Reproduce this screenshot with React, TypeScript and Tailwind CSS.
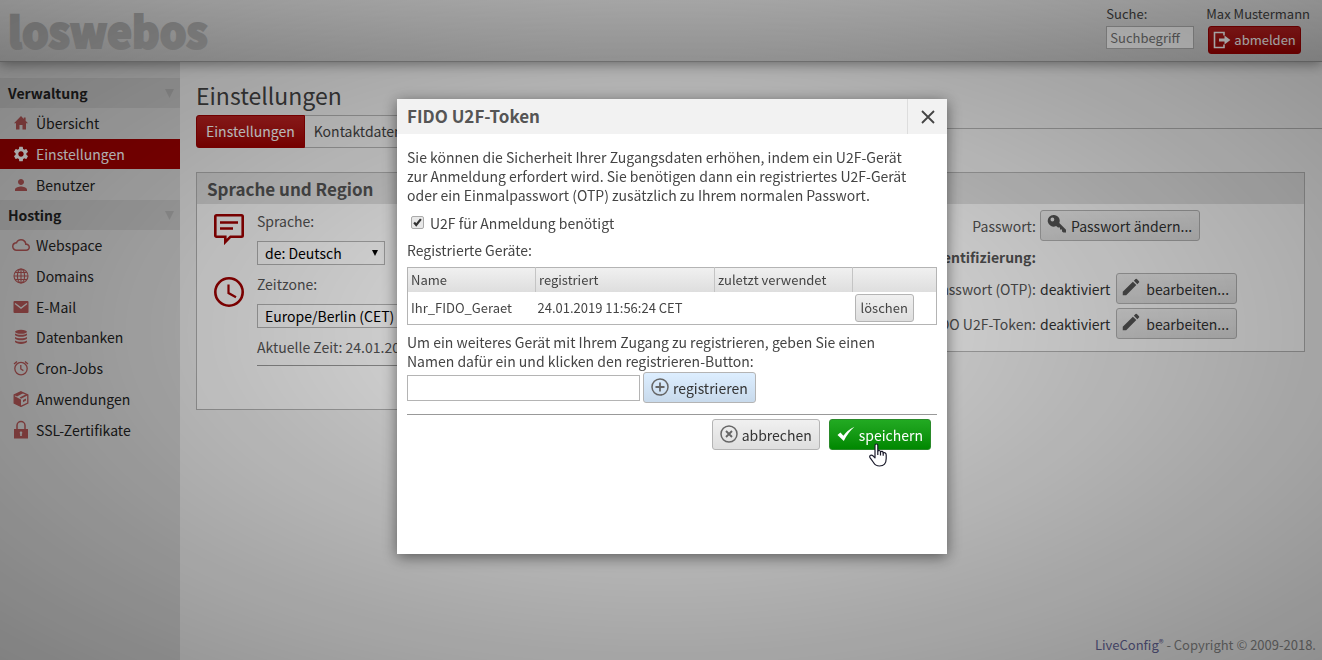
import React, {useState} from 'react';
import {MdCloudQueue, MdEdit, MdPerson, MdSettings} from 'react-icons/md';

const HomeIcon = () => (
    <svg viewBox="0 0 16 16" className="w-4 h-4" fill="currentColor">
        <path d="M8 1 L1 8.3 H3 V14.5 H6.5 V10 H9.5 V14.5 H13 V8.3 H15 L12.6 5.8 V2.5 H10.8 V4 Z"/>
    </svg>
)

const GlobeIcon = () => (
    <svg viewBox="0 0 16 16" className="w-4 h-4" fill="none" stroke="currentColor" strokeWidth="1.1">
        <circle cx="8" cy="8" r="7"/>
        <ellipse cx="8" cy="8" rx="3.6" ry="7"/>
        <path d="M8 1 V15 M1 8 H15 M2.2 4.5 H13.8 M2.2 11.5 H13.8"/>
    </svg>
)

const MailIcon = () => (
    <svg viewBox="0 0 16 16" className="w-4 h-4">
        <rect x="0.5" y="2" width="15" height="12" rx="1" fill="currentColor"/>
        <path d="M2 4.5 L8 9 L14 4.5" fill="none" stroke="#d7d7d7" strokeWidth="1.4"/>
    </svg>
)

const DatabaseIcon = () => (
    <svg viewBox="0 0 16 16" className="w-4 h-4" fill="currentColor">
        <ellipse cx="8" cy="2.8" rx="6" ry="2"/>
        <path d="M2 4.4 C4 6.2 12 6.2 14 4.4 V6 C13 8.4 3 8.4 2 6 Z"/>
        <path d="M2 8 C4 9.8 12 9.8 14 8 V9.4 C13 11.8 3 11.8 2 9.4 Z"/>
        <path d="M2 11.4 C4 13.2 12 13.2 14 11.4 V12.8 C13 15.6 3 15.6 2 12.8 Z"/>
    </svg>
)

const AlarmIcon = () => (
    <svg viewBox="0 0 16 16" className="w-4 h-4" fill="none" stroke="currentColor" strokeWidth="1.3">
        <circle cx="8" cy="8.6" r="6.2"/>
        <path d="M7.8 5 V9 L10.4 10.6 M1 4 L4 1.4 M15 4 L12 1.4"/>
    </svg>
)

const BoxIcon = () => (
    <svg viewBox="0 0 16 16" className="w-4 h-4">
        <path d="M8 0.8 L14.8 4 V12 L8 15.4 L1.2 12 V4 Z" fill="none" stroke="currentColor" strokeWidth="1.3"/>
        <path d="M1.2 5 L8 8.4 V15.4 L1.2 12 Z M1.2 4 L8 0.8 L10.6 2 L4 5.4 Z M6.6 6.6 L13 3.2 L14.8 4.2 L8 7.8 Z M10 9 L13 7.4 V9.6 L10 11.2 Z"
              fill="currentColor"/>
    </svg>
)

const LockIcon = () => (
    <svg viewBox="0 0 16 20" className="w-4 h-5">
        <path d="M4 9 V5.5 a4 4 0 0 1 8 0 V9" fill="none" stroke="currentColor" strokeWidth="1.5"/>
        <rect x="1" y="9" width="14" height="9.5" fill="currentColor"/>
        <path d="M8 11.6 V16 M6.8 12.8 H9.2" stroke="#d7d7d7" strokeWidth="1.6"/>
    </svg>
)

const CommentIcon = () => (
    <svg viewBox="0 0 32 32" className="w-8 h-8" fill="none" stroke="#a00000" strokeWidth="2.6">
        <path d="M3.5 2.3 H28.5 Q29.7 2.3 29.7 3.5 V22.5 Q29.7 23.7 28.5 23.7 H17.5 L12.3 29 V23.7 H3.5 Q2.3 23.7 2.3 22.5 V3.5 Q2.3 2.3 3.5 2.3 Z"/>
        <path d="M7 9.5 H25 M7 15.5 H20"/>
    </svg>
)

const ClockIcon = () => (
    <svg viewBox="0 0 32 32" className="w-8 h-8" fill="none" stroke="#a00000" strokeWidth="2.6">
        <circle cx="16" cy="16" r="13.7"/>
        <path d="M15.5 8.5 V17 L23 21.2" strokeWidth="2.2"/>
    </svg>
)

const KeyIcon = () => (
    <svg viewBox="0 0 20 20" className="w-5 h-5 -ml-px mb-[3px]" fill="#555555">
        <path fillRule="evenodd"
              d="M6.8 1 a5.8 5.8 0 1 0 2.3 11 L11 13.4 H13 V15.4 H15 V17.4 L16.4 18.6 H19 V15.8 L12.3 9 A5.8 5.8 0 0 0 6.8 1 Z M5.4 3.6 a1.9 1.9 0 1 1 0 3.8 a1.9 1.9 0 0 1 0 -3.8 Z"/>
    </svg>
)

const LogoutIcon = () => (
    <svg viewBox="0 0 18 18" className="w-[18px] h-[18px]">
        <path d="M11 4.5 V1.5 H1.5 V16.5 H11 V13.5" fill="none" stroke="#fff" strokeWidth="1.6"/>
        <path d="M6 7.4 H11.5 V4.4 L17.4 9 L11.5 13.6 V10.6 H6 Z" fill="#fff"/>
    </svg>
)

const PlusIcon = () => (
    <svg viewBox="0 0 18 18" className="w-[18px] h-[18px] mb-[2px]" fill="none" stroke="#666" strokeWidth="1.5">
        <circle cx="9" cy="9" r="8"/>
        <path d="M9 4.5 V13.5 M4.5 9 H13.5" strokeWidth="1.8"/>
    </svg>
)

const CancelIcon = () => (
    <svg viewBox="0 0 18 18" className="w-[18px] h-[18px] mb-[2px]" fill="none" stroke="#666" strokeWidth="1.5">
        <circle cx="9" cy="9" r="8"/>
        <path d="M6 6 L12 12 M12 6 L6 12" strokeWidth="1.9"/>
    </svg>
)

const CheckIcon = () => (
    <svg viewBox="0 0 18 18" className="w-[18px] h-[18px] mb-[2px]" fill="#fff">
        <path d="M0.5 10 L3.4 7.6 L6.4 10.8 Q10.5 5 17.5 1.8 Q11 7.5 6.8 16 Z"/>
    </svg>
)

const verwaltung = [
    {label: 'Übersicht', icon: <HomeIcon/>},
    {label: 'Einstellungen', icon: <MdSettings size={18}/>, active: true},
    {label: 'Benutzer', icon: <MdPerson size={18}/>},
]

const hosting = [
    {label: 'Webspace', icon: <MdCloudQueue size={18}/>},
    {label: 'Domains', icon: <GlobeIcon/>},
    {label: 'E-Mail', icon: <MailIcon/>},
    {label: 'Datenbanken', icon: <DatabaseIcon/>},
    {label: 'Cron-Jobs', icon: <AlarmIcon/>},
    {label: 'Anwendungen', icon: <BoxIcon/>},
    {label: 'SSL-Zertifikate', icon: <LockIcon/>},
]

const MenuTitle = ({title}: { title: string }) => (
    <h2 className="flex items-center justify-between h-[30px] pl-2 pr-[5px] bg-[#c8c8c8] font-bold text-[#222]">
        {title}
        <svg viewBox="0 0 10 10" className="w-[10px] h-[10px]">
            <path d="M0 1 H9 L4.5 10 Z" fill="#b4b4b4"/>
        </svg>
    </h2>
)

const MenuList = ({items}: { items: any[] }) => (
    <>
        {items.map((item) => (
            <li key={item.label}>
                <a href="#"
                   className={item.active
                       ? 'flex items-center h-full gap-[6px] pl-3 text-white bg-[#a00000]'
                       : 'flex items-center h-full gap-[6px] pl-3 text-[#222]'}>
                    <span className={item.active ? 'flex justify-center w-[18px] text-white' : 'flex justify-center w-[18px] text-[#b05555]'}>
                        {item.icon}
                    </span>
                    {item.label}
                </a>
            </li>
        ))}
    </>
)

const button = 'relative inline-flex items-center gap-1 h-[31px] px-[7px] border rounded-[3px] bg-linear-to-b'
const greyButton = button + ' border-[#b4b4b4] from-[#f0f0f0] to-[#dedede] text-[#333]'

const Select = ({id, value, className}: { id: string, value: string, className: string }) => (
    <div className={'relative ' + className}>
        <select id={id} className="block w-full h-6 pl-[7px] border border-[#b4b4b4] bg-white text-black appearance-none">
            <option>{value}</option>
        </select>
        <svg viewBox="0 0 6 6" className="absolute right-[7px] top-[9px] w-[6px] h-[6px] pointer-events-none">
            <path d="M0 0 H6 L3 6 Z"/>
        </svg>
    </div>
)

const Header = () => (
    <header className="relative flex justify-between h-[62px] pl-2 pr-3 border-b border-[#999] bg-linear-to-b from-[#f0f0f0] to-[#c8c8c8] shadow-[0_2px_12px_rgba(0,0,0,0.4)]">
        <div className="text-[42px] leading-[60px] font-black text-[#b4b4b4] [-webkit-text-stroke:2px_#b4b4b4]">loswebos</div>
        <div className="flex gap-3 pt-[5px] text-[13px] leading-[18px] text-[#444]">
            <div>
                <label htmlFor="search" className="block mb-[3px]">Suche:</label>
                <input id="search" type="text" placeholder="Suchbegriff"
                       className="block w-[88px] h-[23px] px-[3px] border border-[#b4b4b4] bg-white placeholder:text-[#777]"/>
            </div>
            <div>
                <div className="mb-[3px]">Max Mustermann</div>
                <button type="button"
                        className="flex items-center gap-[3px] h-[28px] ml-[2px] px-1 border border-[#a00000] rounded-[3px] bg-linear-to-b from-[#bb2222] to-[#a00000] text-white">
                    <LogoutIcon/>abmelden
                </button>
            </div>
        </div>
    </header>
)

const Settings = () => (
    <main className="flex-1 pt-[15px] text-[#555]">
        <h1 className="pb-[2px] pl-4 text-[23px] leading-[36px] text-[#444]">Einstellungen</h1>
        <div className="flex items-start pl-4">
            <nav className="flex h-[33px] leading-[31px] border border-[#b4b4b4] rounded-[3px]">
                <a href="#"
                   className="-m-px px-[9px] border border-[#a00000] rounded-l-[3px] bg-linear-to-b from-[#bb2222] to-[#a00000] text-white">Einstellungen</a>
                <a href="#" className="px-[10px] text-[#444]">Kontaktdaten</a>
            </nav>
            <div className="flex-1 mt-[13px] border-t border-[#b4b4b4]"/>
        </div>

        <div className="grid items-start grid-cols-2 gap-4 pt-6 pl-4 pr-[17px]">
            <section className="pb-[43px] border border-[#b4b4b4] bg-[#fcfcfc]">
                <h2 className="h-[31px] pl-[10px] text-[17px] leading-[31px] font-bold bg-[#e0e0e0]">Sprache und Region</h2>
                <div className="grid grid-cols-[32px_1fr] gap-x-[12px] px-4 pt-[7px]">
                    <div className="pt-[2px]"><CommentIcon/></div>
                    <div>
                        <label htmlFor="language" className="block leading-[20px]">Sprache:</label>
                        <Select id="language" value="de: Deutsch" className="w-[128px] mt-[10px]"/>
                    </div>
                    <div className="pt-[11px]"><ClockIcon/></div>
                    <div className="pt-[9px]">
                        <label htmlFor="timezone" className="block leading-[20px]">Zeitzone:</label>
                        <Select id="timezone" value="Europe/Berlin (CET)" className="w-[200px] mt-[10px]"/>
                        <p className="pt-2 pb-[7px] leading-[22px] border-b border-[#999]">Aktuelle Zeit: 24.01.2019</p>
                    </div>
                </div>
            </section>

            <section className="border border-[#b4b4b4] bg-[#fcfcfc]">
                <h2 className="h-[31px] pl-[10px] text-[17px] leading-[31px] font-bold bg-[#e0e0e0]">Sicherheit</h2>
                <div className="grid grid-cols-[1fr_264px] items-center gap-x-1 gap-y-1 pt-[6px] pb-3">
                    <div className="text-right">Passwort:</div>
                    <div className="flex">
                        <button type="button" className={greyButton}><KeyIcon/> Passwort ändern...</button>
                    </div>
                    <div className="h-6 leading-[24px] font-bold text-right">Zwei-Faktor-Authentifizierung:</div>
                    <div/>
                    <div className="text-right">Einmalpasswort (OTP):</div>
                    <div className="flex items-center gap-[6px] text-[#333]">
                        deaktiviert
                        <button type="button" className={greyButton}><MdEdit size={22} color="#555" className="-ml-1 mb-[3px]"/> bearbeiten...</button>
                    </div>
                    <div className="text-right">FIDO U2F-Token:</div>
                    <div className="flex items-center gap-[6px] text-[#333]">
                        deaktiviert
                        <button type="button" className={greyButton}><MdEdit size={22} color="#555" className="-ml-1 mb-[3px]"/> bearbeiten...</button>
                    </div>
                </div>
            </section>
        </div>
    </main>
)

const TokenDialog = () => {
    const [required, setRequired] = useState(true)
    const [name, setName] = useState('')

    return (
        <div role="dialog" aria-labelledby="dialog-title"
             className="w-[550px] pb-[104px] bg-white text-[#444] shadow-[0_3px_14px_rgba(0,0,0,0.5)]">
            <div className="flex h-[35px] bg-[#f2f2f2]">
                <h2 id="dialog-title" className="flex-1 pl-[10px] text-[17px] leading-[34px] font-bold text-[#555]">FIDO U2F-Token</h2>
                <button type="button" aria-label="Schließen"
                        className="flex items-center justify-center w-10 border-l border-[#dddddd]">
                    <svg viewBox="0 0 14 14" className="w-[14px] h-[14px]" stroke="#444" strokeWidth="1.8">
                        <path d="M1 1 L13 13 M13 1 L1 13"/>
                    </svg>
                </button>
            </div>
            <div className="px-[10px] pt-[14px]">
                <p className="leading-[19px]">
                    Sie können die Sicherheit Ihrer Zugangsdaten erhöhen, indem ein U2F-Gerät<br/>
                    zur Anmeldung erfordert wird. Sie benötigen dann ein registriertes U2F-Gerät<br/>
                    oder ein Einmalpasswort (OTP) zusätzlich zu Ihrem normalen Passwort.
                </p>
                <label className="relative flex items-center gap-[6px] pl-1 mt-2 leading-[20px]">
                    <input type="checkbox" checked={required} onChange={e => setRequired(e.target.checked)}
                           className="absolute w-[13px] h-[13px] opacity-0"/>
                    <svg viewBox="0 0 13 13" className="w-[13px] h-[13px] mb-[2px] border border-[#aaa] rounded-[2px] bg-[#e8e8e8]">
                        {required && <path d="M2.5 6.5 L5 9.5 L10.5 2.5" fill="none" stroke="#333" strokeWidth="2.6"/>}
                    </svg>
                    U2F für Anmeldung benötigt
                </label>
                <p className="mt-[7px] leading-[20px]">Registrierte Geräte:</p>

                <table className="w-full mt-[7px] text-[13px] text-left border border-[#b4b4b4] table-fixed">
                    <thead>
                    <tr className="h-6 bg-linear-to-b from-[#f0f0f0] to-[#dedede]">
                        <th className="w-[128px] pl-[3px] font-normal border-r border-[#c4c4c4]">Name</th>
                        <th className="w-[179px] pl-[3px] font-normal border-r border-[#c4c4c4]">registriert</th>
                        <th className="w-[138px] pl-[3px] font-normal border-r border-[#c4c4c4]">zuletzt verwendet</th>
                        <th/>
                    </tr>
                    </thead>
                    <tbody>
                    <tr className="h-[33px]">
                        <td className="pl-[3px]">Ihr_FIDO_Geraet</td>
                        <td className="pl-[2px]">24.01.2019 11:56:24 CET</td>
                        <td/>
                        <td className="pl-[2px]">
                            <button type="button"
                                    className="block h-[28px] px-[5px] text-[13px] border border-[#b4b4b4] rounded-[3px] bg-linear-to-b from-[#f0f0f0] to-[#dedede]">löschen
                            </button>
                        </td>
                    </tr>
                    </tbody>
                </table>

                <label htmlFor="device" className="block mt-2 leading-[19px]">
                    Um ein weiteres Gerät mit Ihrem Zugang zu registrieren, geben Sie einen<br/>
                    Namen dafür ein und klicken den registrieren-Button:
                </label>
                <div className="flex items-center gap-[3px] mt-px">
                    <input id="device" type="text" value={name} onChange={e => setName(e.target.value)}
                           className="w-[233px] h-[26px] px-1 border border-[#b4b4b4] bg-white"/>
                    <button type="button" className={button + ' border-[#b4b4b4] from-[#ddeeff] to-[#c8daec] text-[#333]'}>
                        <PlusIcon/>registrieren
                    </button>
                </div>

                <div className="flex justify-end gap-[9px] pt-1 pr-[6px] mt-[11px] border-t border-[#999]">
                    <button type="button" className={greyButton}><CancelIcon/>abbrechen</button>
                    <button type="button" className={button + ' border-[#2a8a2a] from-[#22aa22] to-[#008800] text-white'}>
                        <CheckIcon/>speichern
                        <svg viewBox="0 0 18 24" className="absolute left-[39px] top-[23px] w-[18px] h-6"
                             fill="#fff" stroke="#1a1a2a" strokeWidth="1.2" strokeLinejoin="round">
                            <path d="M6 14 V2.6 Q6 1 7.4 1 Q8.8 1 8.8 2.6 V8.5 Q9 7.3 10.2 7.5 Q11.5 7.7 11.5 9 Q12 8 13.2 8.4 Q14.2 8.8 14.2 10 Q14.8 9.2 16 9.8 Q17.2 10.4 17.2 12 V15.5 Q17.2 23 10.5 23 Q6.5 23 4.5 19.5 L1 14.6 Q0.2 13 1.6 12.3 Q2.8 11.8 4 12.8 L6 14.8 Z"/>
                            <path d="M8.8 8.5 V12 M11.5 9 V12.4 M14.2 10 V12.8"/>
                        </svg>
                    </button>
                </div>
            </div>
        </div>
    )
}

const App = () => {
    return (
        <div lang="de"
             className="flex flex-col min-h-screen font-['Noto_Sans_CJK_SC','Noto_Sans',sans-serif] text-[14px] leading-[20px] bg-[#f0f0f0]">
            <Header/>
            <div className="flex flex-1">
                <aside className="w-[180px] pt-4 bg-[#d7d7d7]">
                    <MenuTitle title="Verwaltung"/>
                    <ul className="grid auto-rows-fr h-[92px]"><MenuList items={verwaltung}/></ul>
                    <MenuTitle title="Hosting"/>
                    <ul className="grid auto-rows-fr h-[215px]"><MenuList items={hosting}/></ul>
                </aside>
                <div className="flex flex-col flex-1">
                    <Settings/>
                    <footer className="pr-[6px] pb-[5px] text-[13px] text-right text-[#888]">
                        <a href="#" className="text-[#666699]">LiveConfig<sup className="text-[10px] top-[-3px]">®</sup></a> - Copyright © 2009-2018.
                    </footer>
                </div>
            </div>

            <div className="fixed inset-0 flex items-start justify-center pt-[99px] pl-[22px] bg-[radial-gradient(rgba(0,0,0,0.1),rgba(0,0,0,0.4))]">
                <TokenDialog/>
            </div>
        </div>
    )
}

export default App;
